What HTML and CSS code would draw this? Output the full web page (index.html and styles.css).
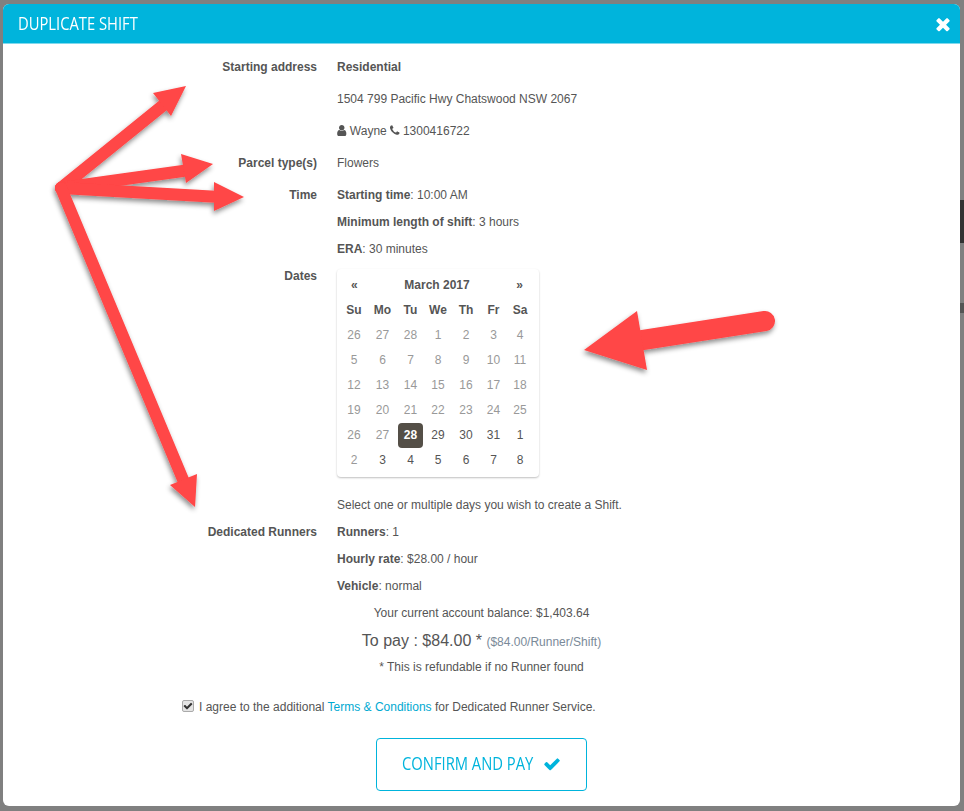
FILE: index.html
```html
<!DOCTYPE html>
<html lang="en">
<head>
    <meta charset="UTF-8">
    <title>Duplicate Shift</title>
    <link rel="stylesheet" href="styles.css">
</head>
<body>
    <div class="side-bar side-bar-top"></div>
    <div class="side-bar side-bar-low"></div>
    <div class="modal">
        <div class="modal-header">
            <h4>DUPLICATE SHIFT</h4>
            <svg class="close-icon" viewBox="0 0 1792 1792"><path d="M1490 1322q0 40-28 68l-136 136q-28 28-68 28t-68-28l-294-294-294 294q-28 28-68 28t-68-28l-136-136q-28-28-28-68t28-68l294-294-294-294q-28-28-28-68t28-68l136-136q28-28 68-28t68 28l294 294 294-294q28-28 68-28t68 28l136 136q28 28 28 68t-28 68l-294 294 294 294q28 28 28 68z"/></svg>
        </div>
        <div class="modal-body">
            <div class="row">
                <div class="label">Starting address</div>
                <div class="value">
                    <p class="wide"><b>Residential</b></p>
                    <p class="wide">1504 799 Pacific Hwy Chatswood NSW 2067</p>
                    <p class="wide">
                        <svg class="icon" viewBox="256 128 1280 1536"><path d="M1536 1399q0 109-62.5 187t-150.5 78h-854q-88 0-150.5-78t-62.5-187q0-85 8.5-160.5t31.5-152 58.5-131 94-89 134.5-34.5q131 128 313 128t313-128q76 0 134.5 34.5t94 89 58.5 131 31.5 152 8.5 160.5zm-256-887q0 159-112.5 271.5t-271.5 112.5-271.5-112.5-112.5-271.5 112.5-271.5 271.5-112.5 271.5 112.5 112.5 271.5z"/></svg>
                        Wayne
                        <svg class="icon" viewBox="192 192 1408 1408"><path d="M1600 1240q0 27-10 70.5t-21 68.5q-21 50-122 106-94 51-186 51-27 0-53-3.5t-57.5-12.5-47-14.5-55.5-20.5-49-18q-98-35-175-83-127-79-264-216t-216-264q-48-77-83-175-3-9-18-49t-20.5-55.5-14.5-47-12.5-57.5-3.5-53q0-92 51-186 56-101 106-122 25-11 68.5-21t70.5-10q14 0 21 3 18 6 53 76 11 19 30 54t35 63.5 31 53.5q3 4 17.5 25t21.5 35.5 7 28.5q0 20-28.5 50t-62 55-62 53-28.5 46q0 9 5 22.5t8.5 20.5 14 24 11.5 19q76 137 174 235t235 174q2 1 19 11.5t24 14 20.5 8.5 22.5 5q18 0 46-28.5t53-62 55-62 50-28.5q14 0 28.5 7t35.5 21.5 25 17.5q25 15 53.5 31t63.5 35 54 30q70 35 76 53 3 7 3 21z"/></svg>
                        1300416722
                    </p>
                </div>
            </div>
            <div class="row">
                <div class="label">Parcel type(s)</div>
                <div class="value"><p class="wide">Flowers</p></div>
            </div>
            <div class="row">
                <div class="label">Time</div>
                <div class="value">
                    <p><b>Starting time</b>: 10:00 AM</p>
                    <p><b>Minimum length of shift</b>: 3 hours</p>
                    <p><b>ERA</b>: 30 minutes</p>
                </div>
            </div>
            <div class="row">
                <div class="label">Dates</div>
                <div class="value">
                    <div class="calendar">
                        <div class="cal-head">
                            <span class="cal-nav">«</span>
                            <b>March 2017</b>
                            <span class="cal-nav">»</span>
                        </div>
                        <div class="cal-grid">
                            <b>Su</b><b>Mo</b><b>Tu</b><b>We</b><b>Th</b><b>Fr</b><b>Sa</b>
                            <span class="off">26</span><span class="off">27</span><span class="off">28</span><span class="off">1</span><span class="off">2</span><span class="off">3</span><span class="off">4</span>
                            <span class="off">5</span><span class="off">6</span><span class="off">7</span><span class="off">8</span><span class="off">9</span><span class="off">10</span><span class="off">11</span>
                            <span class="off">12</span><span class="off">13</span><span class="off">14</span><span class="off">15</span><span class="off">16</span><span class="off">17</span><span class="off">18</span>
                            <span class="off">19</span><span class="off">20</span><span class="off">21</span><span class="off">22</span><span class="off">23</span><span class="off">24</span><span class="off">25</span>
                            <span class="off">26</span><span class="off">27</span><span class="selected">28</span><span>29</span><span>30</span><span>31</span><span>1</span>
                            <span class="off">2</span><span>3</span><span>4</span><span>5</span><span>6</span><span>7</span><span>8</span>
                        </div>
                    </div>
                    <p class="hint">Select one or multiple days you wish to create a Shift.</p>
                </div>
            </div>
            <div class="row">
                <div class="label">Dedicated Runners</div>
                <div class="value">
                    <p><b>Runners</b>: 1</p>
                    <p><b>Hourly rate</b>: $28.00 / hour</p>
                    <p><b>Vehicle</b>: normal</p>
                </div>
            </div>
            <div class="summary">
                <p>Your current account balance: $1,403.64</p>
                <p class="to-pay">To pay : $84.00 * <small>($84.00/Runner/Shift)</small></p>
                <p>* This is refundable if no Runner found</p>
            </div>
            <div class="agree">
                <span class="checkbox"><svg viewBox="0 0 1792 1792"><path d="M1671 566q0 40-28 68l-724 724-136 136q-28 28-68 28t-68-28l-136-136-362-362q-28-28-28-68t28-68l136-136q28-28 68-28t68 28l294 295 656-657q28-28 68-28t68 28l136 136q28 28 28 68z"/></svg></span>
                <span>I agree to the additional <a href="#">Terms &amp; Conditions</a> for Dedicated Runner Service.</span>
            </div>
            <div class="actions">
                <a class="btn-confirm" href="#">
                    <span class="btn-text">CONFIRM AND PAY</span>
                    <svg viewBox="0 0 1792 1792"><path d="M1671 566q0 40-28 68l-724 724-136 136q-28 28-68 28t-68-28l-136-136-362-362q-28-28-28-68t28-68l136-136q28-28 68-28t68 28l294 295 656-657q28-28 68-28t68 28l136 136q28 28 28 68z"/></svg>
                </a>
            </div>
        </div>
    </div>
    <svg class="arrows" viewBox="0 0 964 811">
        <defs>
            <filter id="shadow" x="-20%" y="-20%" width="140%" height="140%">
                <feDropShadow dx="-1" dy="3" stdDeviation="2.5" flood-color="#000" flood-opacity="0.45"/>
            </filter>
        </defs>
        <g filter="url(#shadow)">
            <path class="arrow-line" d="M61 188L166 103"/>
            <path class="arrow-head" d="M186 86L153 93L171 116Z"/>
            <path class="arrow-line" d="M61 188L190 170"/>
            <path class="arrow-head" d="M213 164L181 154L186 183Z"/>
            <path class="arrow-line" d="M61 188L220 197"/>
            <path class="arrow-head" d="M244 197L214 182L214 211Z"/>
            <path class="arrow-line" d="M61 188L184 482"/>
            <path class="arrow-head" d="M195 507L170 485L197 474Z"/>
            <path class="arrow-line arrow-thick" d="M765 321L630 342"/>
            <path class="arrow-head" d="M584 350L637 311L647 370Z"/>
        </g>
    </svg>
</body>
</html>
```

FILE: styles.css
```css
* {
    margin: 0;
    padding: 0;
    box-sizing: border-box;
}
body {
    position: relative;
    height: 811px;
    overflow: hidden;
    background: #808080;
    font-family: "Liberation Sans", Arial, sans-serif;
    font-size: 12px;
    line-height: 17px;
    color: #555;
}
b {
    font-weight: bold;
}
.side-bar {
    position: absolute;
    right: 0;
    width: 4px;
    background: #333;
}
.side-bar-top {
    top: 200px;
    height: 43px;
}
.side-bar-low {
    top: 303px;
    height: 10px;
    background: #555;
}
.modal {
    width: 957px;
    height: 802px;
    margin: 4px 0 0 3px;
    background: #fff;
    border-radius: 6px;
    overflow: hidden;
}
.modal-header {
    display: flex;
    justify-content: space-between;
    align-items: center;
    height: 40px;
    padding: 0 7px 0 15px;
    background: #00b4dc;
    border-bottom: 1px solid #7fd9ed;
}
/* no narrow font here, so squeeze Open Sans */
.modal-header h4 {
    font-family: "Open Sans", sans-serif;
    font-size: 18px;
    font-weight: 400;
    color: #fff;
    transform: scaleX(0.82);
    transform-origin: left center;
}
.close-icon {
    width: 20px;
    height: 20px;
    fill: #fff;
}
.modal-body {
    padding-top: 15px;
}
.row {
    display: flex;
}
.label {
    width: 314px;
    text-align: right;
    font-weight: bold;
}
.value {
    margin-left: 20px;
}
.value p {
    margin-bottom: 10px;
}
.value p.wide {
    margin-bottom: 15px;
}
.icon {
    width: 9.5px;
    height: 11px;
    fill: #555;
    vertical-align: -1px;
}
.calendar {
    width: 202px;
    height: 208px;
    margin-top: 1px;
    padding: 8px 3px 0;
    border-radius: 4px;
    box-shadow: 0 1px 2px rgba(0, 0, 0, 0.25);
}
.cal-head {
    display: flex;
    justify-content: space-between;
    height: 21px;
    padding: 0 13px 0 11px;
}
.cal-nav {
    font-weight: bold;
}
.cal-grid {
    display: grid;
    grid-template-columns: 28px 29px 27px 28px 28px 27px 26px;
    grid-auto-rows: 25px;
    align-items: center;
    text-align: center;
}
.cal-grid .off {
    color: #999;
}
.cal-grid .selected {
    height: 25px;
    margin: 0 1px;
    line-height: 25px;
    background: #544f47;
    border-radius: 4px;
    color: #fff;
    font-weight: bold;
}
.value p.hint {
    margin-top: 20px;
}
.summary {
    text-align: center;
}
.summary p {
    margin-bottom: 10px;
}
.summary .to-pay {
    height: 17px;
    font-size: 16px;
}
.to-pay small {
    font-size: 12px;
    color: #7a8a99;
}
.agree {
    display: flex;
    align-items: center;
    gap: 5px;
    margin: 23px 0 0 179px;
}
.agree a {
    color: #00a9d1;
    text-decoration: none;
}
.checkbox {
    display: flex;
    align-items: center;
    justify-content: center;
    width: 12px;
    height: 12px;
    margin-bottom: 3px;
    background: #e4e4e4;
    border: 1px solid #aaa;
    border-radius: 2px;
}
.checkbox svg {
    width: 10px;
    height: 10px;
    fill: #333;
}
.actions {
    display: flex;
    justify-content: center;
    margin-top: 22px;
}
.btn-confirm {
    display: flex;
    align-items: center;
    justify-content: center;
    gap: 9px;
    width: 211px;
    height: 53px;
    padding-bottom: 2px;
    border: 1px solid #00b4dc;
    border-radius: 4px;
    font-family: "Open Sans", sans-serif;
    font-size: 18px;
    color: #00b4dc;
    text-decoration: none;
}
.btn-text {
    width: 132px;
    white-space: nowrap;
    transform: scaleX(0.82);
    transform-origin: left center;
}
.btn-confirm svg {
    width: 18px;
    height: 18px;
    fill: #00b4dc;
}
.arrows {
    position: absolute;
    top: 0;
    left: 0;
    width: 964px;
    height: 811px;
    pointer-events: none;
}
.arrow-line {
    fill: none;
    stroke: #ff4646;
    stroke-width: 12;
    stroke-linecap: round;
}
.arrow-thick {
    stroke-width: 20;
}
.arrow-head {
    fill: #ff4646;
}
```
